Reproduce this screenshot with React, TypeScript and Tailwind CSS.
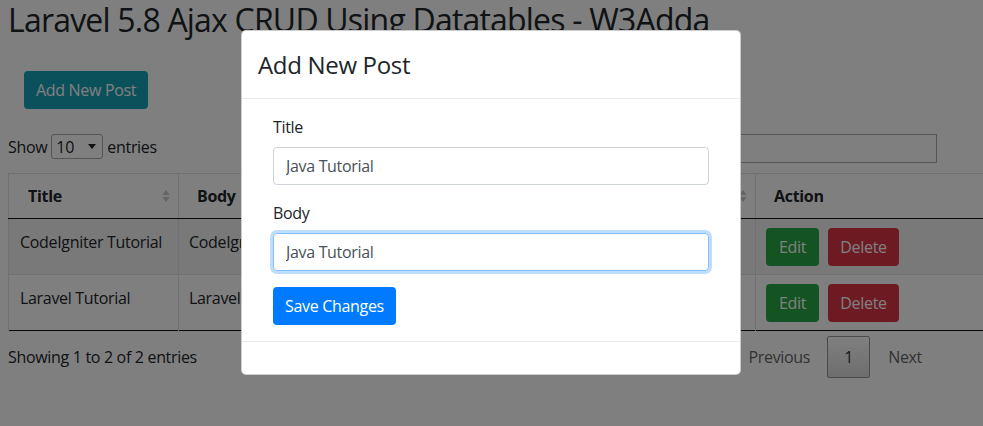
import React from 'react';

const rows = [
  { title: 'CodeIgniter Tutorial', body: 'CodeIgniter Tutorial', date: '2019-05-10' },
  { title: 'Laravel Tutorial', body: 'Laravel Tutorial', date: '2019-05-10' },
];

function SortIcon() {
  return (
    <svg width="8" height="14" viewBox="0 0 8 14" className="absolute right-[8px] top-1/2 -translate-y-1/2">
      <path d="M4 1 L7.5 6 L0.5 6 Z" fill="#c8c8c8" />
      <path d="M4 13 L7.5 8 L0.5 8 Z" fill="#c8c8c8" />
    </svg>
  );
}

export default function App() {
  return (
    <div className="relative h-[426px] w-[983px] overflow-hidden bg-white font-['Open_Sans','Noto_Sans',sans-serif] text-[16px] tracking-[-0.02em] text-[#212529]">
      {/* page behind the modal */}
      <div className="px-2">
        <h1 className="text-[32px] leading-[40px] font-normal tracking-[-0.025em] whitespace-nowrap">
          Laravel 5.8 Ajax CRUD Using Datatables - W3Adda
        </h1>

        <div className="mt-[31px] pl-4">
          <button className="h-[38px] rounded-[4px] bg-[#17a2b8] px-3 text-white">Add New Post</button>
        </div>

        <div className="mt-[25px] flex w-[929px] items-start justify-between">
          <div className="flex items-center">
            <span>Show</span>
            <div className="mx-1 flex h-[25px] w-[52px] items-center justify-between rounded-[3px] border border-[#aaa] bg-white pl-1 pr-[6px]">
              <span>10</span>
              <svg width="8" height="5" viewBox="0 0 8 5">
                <path d="M0 0 L8 0 L4 5 Z" fill="#222" />
              </svg>
            </div>
            <span>entries</span>
          </div>
          <div className="flex items-center">
            <span className="mr-1">Search:</span>
            <div className="h-[29px] w-[200px] border border-[#aaa] bg-white" />
          </div>
        </div>

        <table className="mt-[10px] w-[1000px] border-collapse">
          <thead>
            <tr className="h-[45px] border-t border-[#dee2e6]">
              <th className="relative w-[170px] border-x border-b border-x-[#dee2e6] border-b-[#111] pl-[19px] text-left font-bold">
                Title
                <SortIcon />
              </th>
              <th className="relative w-[400px] border-x border-b border-x-[#dee2e6] border-b-[#111] pl-[18px] text-left font-bold">
                Body
                <SortIcon />
              </th>
              <th className="relative w-[177px] border-x border-b border-x-[#dee2e6] border-b-[#111] pl-[18px] text-left font-bold">
                Created At
                <SortIcon />
              </th>
              <th className="border-x border-b border-x-[#dee2e6] border-b-[#111] pl-[18px] text-left font-bold">Action</th>
            </tr>
          </thead>
          <tbody>
            {rows.map((r, i) => (
              <tr
                key={r.title}
                className={`h-[56px] ${i === 0 ? 'bg-[#f2f2f2] border-b border-[#dee2e6]' : 'border-b border-[#111]'}`}
              >
                <td className="border-x border-[#dee2e6] pl-[11px] pt-[11px] align-top">{r.title}</td>
                <td className="border-x border-[#dee2e6] pl-[10px] pt-[11px] align-top">{r.body}</td>
                <td className="border-x border-[#dee2e6] pl-[10px] pt-[11px] align-top">{r.date}</td>
                <td className="border-x border-[#dee2e6] pl-[10px] pt-[9px] align-top">
                  <div className="flex gap-[9px]">
                    <button className="h-[38px] w-[53px] rounded-[4px] bg-[#28a745] text-white">Edit</button>
                    <button className="h-[38px] w-[71px] rounded-[4px] bg-[#dc3545] text-white">Delete</button>
                  </div>
                </td>
              </tr>
            ))}
          </tbody>
        </table>

        <div className="mt-[5px] flex w-[929px] items-center justify-between">
          <span>Showing 1 to 2 of 2 entries</span>
          <div className="flex items-center">
            <span className="pl-[12px] pr-[17px] text-[#666]">Previous</span>
            <span className="flex h-[42px] w-[43px] items-center justify-center rounded-[2px] border border-[#979797] bg-gradient-to-b from-white to-[#dcdcdc] text-[#333]">
              1
            </span>
            <span className="pl-[18px] pr-[15px] text-[#666]">Next</span>
          </div>
        </div>
      </div>

      {/* backdrop */}
      <div className="absolute inset-0 bg-black/50" />

      {/* modal */}
      <div className="absolute left-[241px] top-[30px] w-[500px] rounded-[5px] border border-black/20 bg-white">
        <div className="border-b border-[#e9ecef] px-4 py-4">
          <h4 className="text-[24px] leading-[35px]">Add New Post</h4>
        </div>
        <div className="p-4">
          <form className="px-[15px]">
            <div className="mb-4">
              <label className="mb-2 block leading-6">Title</label>
              <input
                readOnly
                value="Java Tutorial"
                className="block h-[38px] w-full rounded-[4px] border border-[#ced4da] px-3 text-[#495057] outline-none"
              />
            </div>
            <div className="mb-4">
              <label className="mb-2 block leading-6">Body</label>
              <input
                readOnly
                value="Java Tutorial"
                className="block h-[38px] w-full rounded-[4px] border border-[#80bdff] px-3 text-[#495057] shadow-[0_0_0_3px_rgba(0,123,255,0.25)] outline-none"
              />
            </div>
            <button type="button" className="h-[38px] rounded-[4px] bg-[#007bff] px-3 text-white">
              Save Changes
            </button>
          </form>
        </div>
        <div className="h-[33px] border-t border-[#e9ecef]" />
      </div>
    </div>
  );
}
